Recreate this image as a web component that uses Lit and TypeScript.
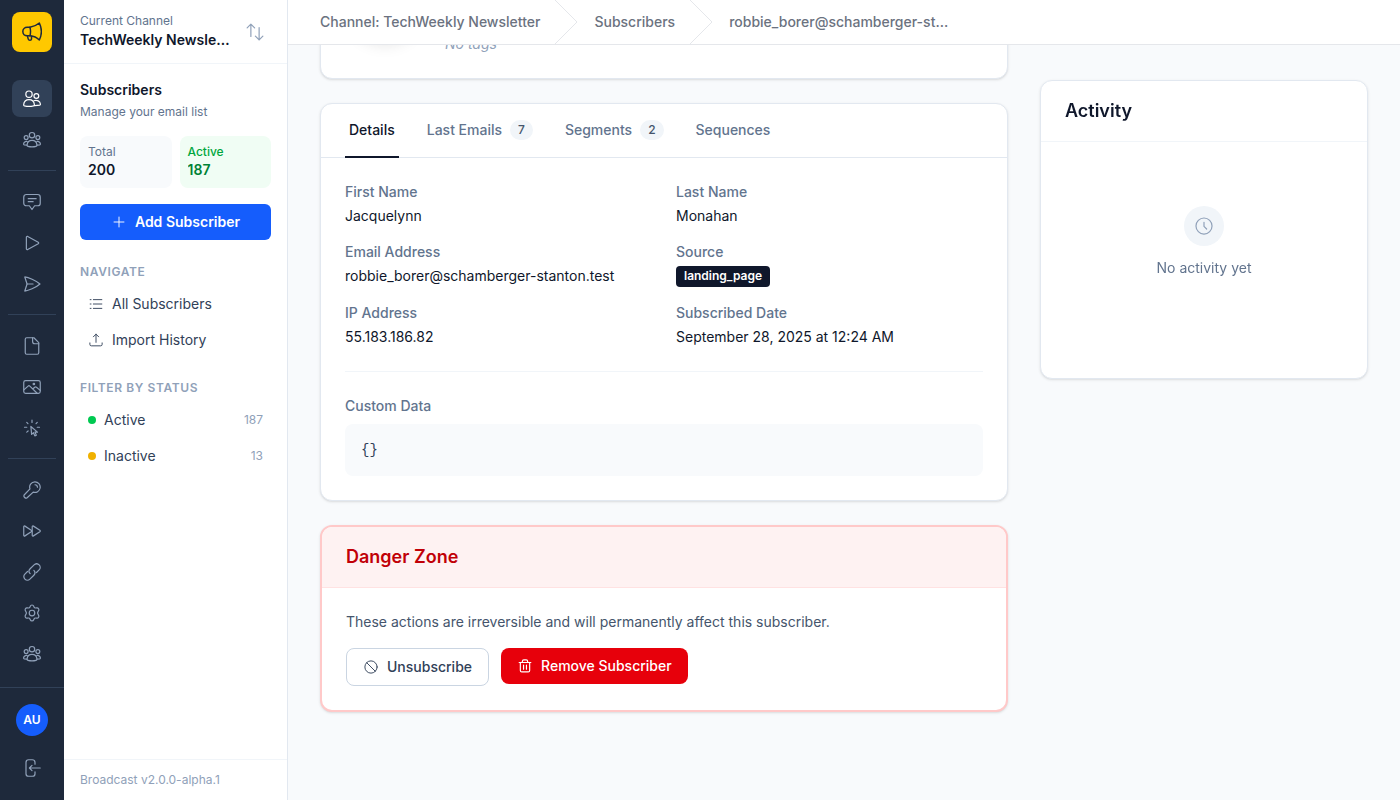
import { LitElement, html, css, svg } from "lit";
import { customElement } from "lit/decorators.js";
import { classMap } from "lit/directives/class-map.js";

// Outline icons on a 24-unit grid.
const icons = {
  megaphone: svg`<path d="M9.500 6.400C14 5.600 18 3.600 20.800 1.200 23.800 7.500 23.800 15.500 20.800 21.600 18 18.800 14 17 9.500 16.600 10.400 13.500 10.400 9.500 9.500 6.400Z"/><path d="M9.500 6.400H6.300C3.200 6.400 1 8.600 1 11.500s2.200 5.100 5.300 5.100H9.500"/><path d="M6.500 16.700L7.500 20.600C8 22.500 11.200 22.600 11.400 20.400L11.500 17"/>`,
  users: svg`<circle cx="8" cy="5.5" r="4.2"/><circle cx="17.8" cy="8" r="3.2"/><path d="M.9 19.6C1.2 15.6 4 12.8 8 12.8s6.9 2.8 7.2 6.8c0 .8-.5 1.4-1.2 1.6-3.9 1-8 1-12 0-.7-.2-1.1-.9-1.1-1.6Z"/><path d="M14.6 14.4C18.6 12.8 22.8 14.9 23.2 18.6c.1.8-.3 1.4-1 1.6-1.6.4-3.7.5-7.1.5"/>`,
  group: svg`<circle cx="12" cy="5.6" r="3.6"/><circle cx="4.2" cy="8.8" r="2.6"/><circle cx="19.8" cy="8.8" r="2.6"/><path d="M5.4 18.6C5.8 15 8.6 12.6 12 12.6s6.200 2.400 6.600 6c.1.9-.4 1.600-1.200 1.800-3.600.9-7.200.9-10.800 0-.8-.2-1.300-.9-1.200-1.800Z"/><path d="M5.600 14C3 13.600 1 15 .8 17.200c0 .7.4 1.200 1 1.300l3.400.3M18.400 14c2.600-.4 4.600 1 4.800 3.200 0 .7-.4 1.200-1 1.300l-3.400.3"/>`,
  message: svg`<path d="M4.500 2h15A3.500 3.500 0 0 1 23 5.500V13.500A3.500 3.500 0 0 1 19.500 17H15.500L12 22 8.500 17H4.500A3.500 3.500 0 0 1 1 13.500V5.500A3.500 3.500 0 0 1 4.500 2Z"/><path d="M7 7.600h10.500M7 11.600h6.500"/>`,
  play: svg`<path d="M4.500 4.300C4.500 3.300 5.500 2.800 6.300 3.200L20.300 11c.8.500.8 1.500 0 2L6.300 20.800c-.8.400-1.800-.1-1.800-1.100Z"/>`,
  send: svg`<path d="M2.400 2.600C7 3 17 7 22.600 12 17 17 7 21 2.400 21.400L5.400 12Z"/><path d="M5.400 12h8"/>`,
  file: svg`<path d="M14.500 1H5A2 2 0 0 0 3 3V21a2 2 0 0 0 2 2H19a2 2 0 0 0 2-2V7.500Z"/><path d="M12.800 1V6a3 3 0 0 0 3 3H21"/>`,
  image: svg`<rect x="1" y="3.500" width="22" height="17" rx="2.500"/><path d="M1.500 15.500L6.800 10.800c.7-.6 1.600-.6 2.300 0L18.500 20M13 14.600l2.600-2.300c.7-.6 1.600-.6 2.300 0L23 16.500"/><circle cx="14.500" cy="8" r="1"/>`,
  click: svg`<path d="M10.500 10L11.500 20.500 14 18.200 15.800 22.500 17.800 21.600 16 17.500H19.300Z"/><path d="M12 1.500v3M5 4.500l1.600 1.600M19 4.500l-1.600 1.600M2 11h3M19 11h3M5 17.500l1.800-1.500"/>`,
  key: svg`<path d="M15.800 1.200a7 7 0 1 1-2.200 13.600L5.500 22.400C3.200 24 .3 21 1.500 18.700L9.300 10.600A7 7 0 0 1 15.800 1.200Z"/><path d="M16 5a3.600 3.600 0 0 1 3.300 3.300"/>`,
  forward: svg`<path d="M1 6.300C1 5.500 1.800 5 2.600 5.500L11 11c.7.500.7 1.500 0 2L2.600 18.500C1.800 19 1 18.500 1 17.700Z"/><path d="M12.300 6.300c0-.8.8-1.300 1.600-.8L22.500 11c.7.500.7 1.500 0 2l-8.600 5.500c-.8.500-1.600 0-1.600-.8Z"/>`,
  link: svg`<path d="M9.500 14.200C7.600 12.300 7.600 9.600 9.500 7.700L14.800 2.500C16.700.6 19.600.6 21.500 2.500s1.900 4.800 0 6.700L18 12.700"/><path d="M14.500 9.800c1.900 1.900 1.900 4.600 0 6.500L9.200 21.500c-1.900 1.900-4.800 1.900-6.700 0s-1.900-4.800 0-6.700L6 11.300"/>`,
  gear: svg`<circle cx="12" cy="12" r="3.700"/><path d="M9.700 2.900C10.500.8 13.500.8 14.300 2.900L14.900 4.300C15.200 5 15.900 5.400 16.700 5.300L18.300 5.100C20.500 4.800 22 7.300 20.700 9.100L19.800 10.900C19.300 11.600 19.300 12.400 19.800 13.100L20.700 14.900C22 16.700 20.500 19.200 18.300 18.900L16.700 18.700C15.900 18.600 15.200 19 14.900 19.700L14.300 21.100C13.500 23.200 10.500 23.200 9.700 21.100L9.100 19.700C8.800 19 8.100 18.600 7.300 18.700L5.700 18.900C3.500 19.200 2 16.700 3.300 14.900L4.200 13.100C4.700 12.400 4.700 11.600 4.200 10.900L3.300 9.100C2 7.300 3.500 4.800 5.700 5.100L7.300 5.300C8.100 5.400 8.800 5 9.100 4.300Z"/>`,
  logout: svg`<path d="M16 7V4.500A3.500 3.500 0 0 0 12.500 1H7.500A3.500 3.500 0 0 0 4 4.500v15A3.500 3.500 0 0 0 7.500 23h5A3.500 3.500 0 0 0 16 19.500V17"/><path d="M23 12H9M12 8.500L8.500 12 12 15.500"/>`,
  swap: svg`<path d="M6.500 18V1.500M1.500 6.500l5-5 5 5"/><path d="M17.500 6v16.500M12.500 17.500l5 5 5-5"/>`,
  plus: svg`<path d="M12 3.500v17M3.500 12h17"/>`,
  list: svg`<path d="M7.500 4.500H22M7.500 12H22M7.500 19.500H22M2 4.500h1.500M2 12h1.500M2 19.500h1.500"/>`,
  upload: svg`<path d="M12 16V2M7.500 6.500L12 2l4.500 4.500M1.500 17v2.500A2.500 2.500 0 0 0 4 22H20a2.500 2.500 0 0 0 2.500-2.500V17"/>`,
  ban: svg`<circle cx="12" cy="12" r="10.500"/><path d="M4.600 4.600l14.800 14.800"/>`,
  trash: svg`<path d="M2 6h20M7.500 6V4A2.500 2.500 0 0 1 10 1.500h4A2.500 2.500 0 0 1 16.500 4V6M4 6V19.500A2.500 2.500 0 0 0 6.500 22h11A2.500 2.500 0 0 0 20 19.500V6M9.500 10.500v7M14.500 10.500v7"/>`,
  clock: svg`<circle cx="12" cy="12" r="10.700"/><path d="M12 7v5.500l3.500 3.500"/>`,
};

type IconName = keyof typeof icons;

const icon = (name: IconName, size = "") =>
  html`<svg class="icon ${size}" viewBox="0 0 24 24" aria-hidden="true">${icons[name]}</svg>`;

const RAIL: { icon: IconName; label: string; active?: boolean }[][] = [
  [
    { icon: "users", label: "Subscribers", active: true },
    { icon: "group", label: "Segments" },
  ],
  [
    { icon: "message", label: "Broadcasts" },
    { icon: "play", label: "Sequences" },
    { icon: "send", label: "Transactional" },
  ],
  [
    { icon: "file", label: "Templates" },
    { icon: "image", label: "Media" },
    { icon: "click", label: "Forms" },
  ],
  [
    { icon: "key", label: "Access tokens" },
    { icon: "forward", label: "Automations" },
    { icon: "link", label: "Webhooks" },
    { icon: "gear", label: "Settings" },
    { icon: "group", label: "Team" },
  ],
];

const TABS = [
  { label: "Details", active: true },
  { label: "Last Emails", count: 7 },
  { label: "Segments", count: 2 },
  { label: "Sequences" },
];

const base = css`
  :host,
  *,
  *::before,
  *::after {
    box-sizing: border-box;
  }
  a {
    color: inherit;
    text-decoration: none;
  }
  button {
    font: inherit;
    color: inherit;
    border: 0;
    background: none;
    padding: 0;
    cursor: pointer;
  }
  h1,
  h2,
  p,
  dl,
  dd,
  pre {
    margin: 0;
    padding: 0;
  }
  .icon {
    width: 18px;
    height: 18px;
    flex: none;
    fill: none;
    stroke: currentColor;
    stroke-width: 1.6;
    stroke-linecap: round;
    stroke-linejoin: round;
  }
  .icon.small {
    width: 14px;
    height: 14px;
    margin: 1px;
  }
`;

@customElement("icon-rail")
export class IconRail extends LitElement {
  static styles = [
    base,
    css`
      :host {
        display: flex;
        flex-direction: column;
        width: 64px;
        flex: none;
        background: #1e293b;
        color: #90a1b9;
      }
      .logo {
        display: grid;
        place-items: center;
        width: 40px;
        height: 40px;
        margin: 12px 12px 28px;
        border-radius: 8px;
        background: #ffc800;
        color: #1e293b;
      }
      .logo .icon {
        width: 20px;
        height: 20px;
        stroke-width: 1.8;
      }
      .nav {
        flex: 1;
        min-height: 0;
        overflow: hidden;
      }
      .group {
        display: grid;
        gap: 4px;
        padding: 0 12px;
      }
      .divider {
        height: 1px;
        margin: 12px 8px;
        border: 0;
        background: #314158;
      }
      .item {
        display: grid;
        place-items: center;
        height: 37px;
        border-radius: 8px;
      }
      .item.active {
        background: #314158;
        color: #fff;
      }
      .foot {
        display: grid;
        justify-items: center;
        gap: 16px;
        padding: 16px 0;
        border-top: 1px solid #314158;
      }
      .avatar {
        width: 32px;
        height: 32px;
        border-radius: 50%;
        background: #155dfc;
        color: #fff;
        font-size: 12px;
        font-weight: 600;
      }
      .exit {
        display: grid;
        place-items: center;
        width: 40px;
        height: 32px;
      }
    `,
  ];

  render() {
    return html`
      <a class="logo" href="#" aria-label="Broadcast home">${icon("megaphone")}</a>
      <nav class="nav" aria-label="Main">
        ${RAIL.map(
          (group, i) => html`
            ${i ? html`<hr class="divider" />` : ""}
            <div class="group">
              ${group.map(
                (item) => html`<a
                  class=${classMap({ item: true, active: !!item.active })}
                  href="#"
                  aria-label=${item.label}
                  >${icon(item.icon)}</a
                >`
              )}
            </div>
          `
        )}
      </nav>
      <div class="foot">
        <button class="avatar" type="button">AU</button>
        <button class="exit" type="button" aria-label="Log out">${icon("logout")}</button>
      </div>
    `;
  }
}

@customElement("side-panel")
export class SidePanel extends LitElement {
  static styles = [
    base,
    css`
      :host {
        display: flex;
        flex-direction: column;
        width: 224px;
        flex: none;
        background: #fff;
        border-right: 1px solid #e2e8f0;
      }
      .channel {
        display: flex;
        align-items: center;
        gap: 16px;
        padding: 13px 23px 13px 16px;
        border-bottom: 1px solid #f1f5f9;
        text-align: left;
      }
      .channel .icon {
        color: #90a1b9;
      }
      .names {
        display: grid;
        flex: 1;
        min-width: 0;
        gap: 1px;
      }
      .caption {
        font-size: 12px;
        line-height: 16px;
        color: #62748e;
      }
      .strong {
        font-weight: 600;
        color: #0f172b;
        overflow: hidden;
        white-space: nowrap;
        text-overflow: ellipsis;
      }
      .body {
        flex: 1;
        padding: 16px;
      }
      .title {
        font-size: 14px;
        line-height: 20px;
        font-weight: 600;
        color: #0f172b;
      }
      .sub {
        margin-top: 4px;
      }
      .stats {
        display: grid;
        grid-template-columns: 1fr 1fr;
        gap: 8px;
        margin: 16px 0;
      }
      .stat {
        display: grid;
        padding: 8px;
        border-radius: 8px;
        background: #f8fafc;
      }
      .stat.good {
        background: #f0fdf4;
      }
      .good .caption {
        color: #00a63e;
        font-weight: 500;
      }
      .good .strong {
        color: #008236;
      }
      .add {
        display: flex;
        align-items: center;
        justify-content: center;
        gap: 8px;
        width: 100%;
        height: 36px;
        border-radius: 6px;
        background: #155dfc;
        color: #fff;
        font-weight: 600;
      }
      .heading {
        margin: 24px 0 8px;
        font-size: 12px;
        line-height: 16px;
        font-weight: 600;
        letter-spacing: 0.05em;
        text-transform: uppercase;
        color: #90a1b9;
      }
      .links {
        display: grid;
        gap: 4px;
      }
      .link {
        display: flex;
        align-items: center;
        gap: 8px;
        padding: 6px 8px;
        color: #314158;
      }
      .count {
        margin-left: auto;
        font-size: 12px;
        color: #90a1b9;
      }
      .dot {
        width: 8px;
        height: 8px;
        border-radius: 50%;
        background: #00c951;
      }
      .dot.idle {
        background: #f0b100;
      }
      .version {
        padding: 12px 16px;
        border-top: 1px solid #f1f5f9;
        font-size: 12px;
        line-height: 16px;
        color: #90a1b9;
      }
    `,
  ];

  render() {
    return html`
      <button class="channel" type="button">
        <span class="names">
          <span class="caption">Current Channel</span>
          <span class="strong">TechWeekly Newsletter</span>
        </span>
        ${icon("swap")}
      </button>
      <div class="body">
        <h2 class="title">Subscribers</h2>
        <p class="caption sub">Manage your email list</p>
        <div class="stats">
          <div class="stat">
            <span class="caption">Total</span><span class="strong">200</span>
          </div>
          <div class="stat good">
            <span class="caption">Active</span><span class="strong">187</span>
          </div>
        </div>
        <button class="add" type="button">${icon("plus", "small")}Add Subscriber</button>
        <h2 class="heading">Navigate</h2>
        <nav class="links" aria-label="Subscribers">
          <a class="link" href="#">${icon("list", "small")}All Subscribers</a>
          <a class="link" href="#">${icon("upload", "small")}Import History</a>
        </nav>
        <h2 class="heading">Filter by status</h2>
        <nav class="links" aria-label="Filter by status">
          <a class="link" href="#"
            ><span class="dot"></span>Active<span class="count">187</span></a
          >
          <a class="link" href="#"
            ><span class="dot idle"></span>Inactive<span class="count">13</span></a
          >
        </nav>
      </div>
      <div class="version">Broadcast v2.0.0-alpha.1</div>
    `;
  }
}

@customElement("subscriber-page")
export class SubscriberPage extends LitElement {
  static styles = [
    base,
    css`
      :host {
        display: flex;
        flex-direction: column;
        flex: 1;
        min-width: 0;
      }
      .crumbs {
        display: flex;
        height: 45px;
        flex: none;
        padding-left: 32px;
        background: #fff;
        border-bottom: 1px solid #e5e7eb;
        font-weight: 500;
        color: #6b7280;
      }
      .crumb {
        display: flex;
        align-items: center;
        gap: 14px;
        margin-right: 16px;
        white-space: nowrap;
      }
      .chevron {
        width: 24px;
        height: 44px;
        fill: none;
        stroke: #e5e7eb;
      }
      .scroll {
        flex: 1;
        min-height: 0;
        overflow-y: auto;
        scrollbar-width: none;
      }
      .layout {
        display: grid;
        grid-template-columns: repeat(3, 1fr);
        column-gap: 32px;
        align-items: start;
        padding: 32px 32px 88px;
      }
      .main {
        display: grid;
        grid-column: span 2;
        gap: 24px;
      }
      .card {
        background: #fff;
        border: 1px solid #e2e8f0;
        border-radius: 12px;
        box-shadow: 0 1px 3px rgba(0, 0, 0, 0.1), 0 1px 2px -1px rgba(0, 0, 0, 0.1);
        overflow: hidden;
      }
      .profile {
        display: flex;
        align-items: flex-end;
        gap: 20px;
        padding: 24px;
      }
      .photo {
        width: 80px;
        height: 80px;
        margin-bottom: 16px;
        border-radius: 50%;
        background: #e2e8f0;
        box-shadow: 0 10px 15px -3px rgba(0, 0, 0, 0.1), 0 4px 6px -4px rgba(0, 0, 0, 0.1);
      }
      .empty-tags {
        font-style: italic;
        color: #90a1b9;
      }
      .tabs {
        display: flex;
        gap: 24px;
        padding: 0 24px;
        border-bottom: 1px solid #e2e8f0;
      }
      .tab {
        display: flex;
        align-items: center;
        gap: 8px;
        padding: 16px 4px;
        margin-bottom: -1px;
        border-bottom: 2px solid transparent;
        font-weight: 500;
        color: #62748e;
      }
      .tab.active {
        border-color: #0f172b;
        color: #0f172b;
      }
      .pill {
        padding: 2px 8px;
        border-radius: 10px;
        background: #f1f5f9;
        color: #45556c;
        font-size: 12px;
        line-height: 16px;
      }
      .content {
        padding: 24px;
      }
      .fields {
        display: grid;
        grid-template-columns: 1fr 1fr;
        gap: 16px 24px;
      }
      .label {
        font-size: 14px;
        line-height: 20px;
        font-weight: 500;
        color: #62748e;
      }
      .value {
        margin-top: 4px;
        color: #0f172b;
      }
      .tag {
        display: block;
        width: fit-content;
        padding: 2px 8px 3px;
        border-radius: 4px;
        background: #0f172b;
        color: #fff;
        font-size: 12px;
        line-height: 16px;
        font-weight: 600;
      }
      .custom {
        margin-top: 24px;
        padding-top: 24px;
        border-top: 1px solid #f1f5f9;
      }
      .code {
        margin-top: 8px;
        padding: 16px;
        border-radius: 8px;
        background: #f8fafc;
        color: #314158;
        font: 14px/20px "Liberation Mono", monospace;
      }
      .head {
        padding: 16px 24px;
        border-bottom: 1px solid #f1f5f9;
        font-size: 18px;
        line-height: 28px;
        font-weight: 600;
        color: #0f172b;
      }
      .danger {
        border: 2px solid #ffc9c9;
      }
      .danger .head {
        background: #fef2f2;
        border-color: #ffe2e2;
        color: #c10007;
      }
      .note {
        color: #45556c;
      }
      .actions {
        display: flex;
        align-items: flex-start;
        gap: 12px;
        margin-top: 16px;
      }
      .button {
        display: flex;
        align-items: center;
        gap: 8px;
        padding: 8px 16px;
        border-radius: 8px;
        line-height: 20px;
        font-weight: 500;
      }
      .outline {
        border: 1px solid #cad5e2;
        color: #314158;
      }
      .solid {
        background: #e7000b;
        color: #fff;
      }
      .solid .icon {
        stroke-width: 2;
      }
      .aside {
        position: sticky;
        top: 35px;
      }
      .idle {
        display: grid;
        justify-items: center;
        align-content: start;
        gap: 12px;
        min-height: 236px;
        padding: 64px 24px 24px;
        color: #62748e;
      }
      .badge {
        display: grid;
        place-items: center;
        width: 40px;
        height: 40px;
        border-radius: 50%;
        background: #f1f5f9;
        color: #90a1b9;
      }
    `,
  ];

  firstUpdated() {
    const scroller = this.renderRoot.querySelector(".scroll")!;
    scroller.scrollTop = scroller.scrollHeight;
  }

  render() {
    const chevron = html`<svg class="chevron" viewBox="0 0 24 44" aria-hidden="true">
      <path d="M1 0L23 22 1 44" />
    </svg>`;
    return html`
      <nav class="crumbs" aria-label="Breadcrumb">
        <span class="crumb"><a href="#">Channel: TechWeekly Newsletter</a>${chevron}</span>
        <span class="crumb"><a href="#">Subscribers</a>${chevron}</span>
        <span class="crumb"><a href="#">robbie_borer@schamberger-st...</a></span>
      </nav>
      <div class="scroll">
        <div class="layout">
          <main class="main">
            <section class="card profile">
              <div class="photo"></div>
              <span class="empty-tags">No tags</span>
            </section>
            <section class="card">
              <div class="tabs" role="tablist">
                ${TABS.map(
                  (tab) => html`<button
                    class=${classMap({ tab: true, active: !!tab.active })}
                    type="button"
                    role="tab"
                    aria-selected=${tab.active ? "true" : "false"}
                  >
                    ${tab.label}${tab.count ? html`<span class="pill">${tab.count}</span>` : ""}
                  </button>`
                )}
              </div>
              <div class="content">
                <dl class="fields">
                  ${this.field("First Name", "Jacquelynn")}
                  ${this.field("Last Name", "Monahan")}
                  ${this.field("Email Address", "robbie_borer@schamberger-stanton.test")}
                  ${this.field("Source", html`<span class="tag">landing_page</span>`)}
                  ${this.field("IP Address", "55.183.186.82")}
                  ${this.field("Subscribed Date", "September 28, 2025 at 12:24 AM")}
                </dl>
                <div class="custom">
                  <h2 class="label">Custom Data</h2>
                  <pre class="code">{}</pre>
                </div>
              </div>
            </section>
            <section class="card danger">
              <h2 class="head">Danger Zone</h2>
              <div class="content">
                <p class="note">
                  These actions are irreversible and will permanently affect this subscriber.
                </p>
                <div class="actions">
                  <button class="button outline" type="button">
                    ${icon("ban", "small")}Unsubscribe
                  </button>
                  <button class="button solid" type="button">
                    ${icon("trash", "small")}Remove Subscriber
                  </button>
                </div>
              </div>
            </section>
          </main>
          <aside class="card aside">
            <h2 class="head">Activity</h2>
            <div class="idle">
              <span class="badge">${icon("clock")}</span>
              <p>No activity yet</p>
            </div>
          </aside>
        </div>
      </div>
    `;
  }

  private field(label: string, value: unknown) {
    return html`<div>
      <dt class="label">${label}</dt>
      <dd class="value">${value}</dd>
    </div>`;
  }
}

@customElement("app-root")
export class AppRoot extends LitElement {
  static styles = css`
    :host {
      display: flex;
      height: 100vh;
      overflow: hidden;
      background: #f8fafc;
      color: #0f172b;
      font: 14px/20px Inter, "Liberation Sans", sans-serif;
    }
  `;

  render() {
    return html`<icon-rail></icon-rail><side-panel></side-panel><subscriber-page></subscriber-page>`;
  }
}
